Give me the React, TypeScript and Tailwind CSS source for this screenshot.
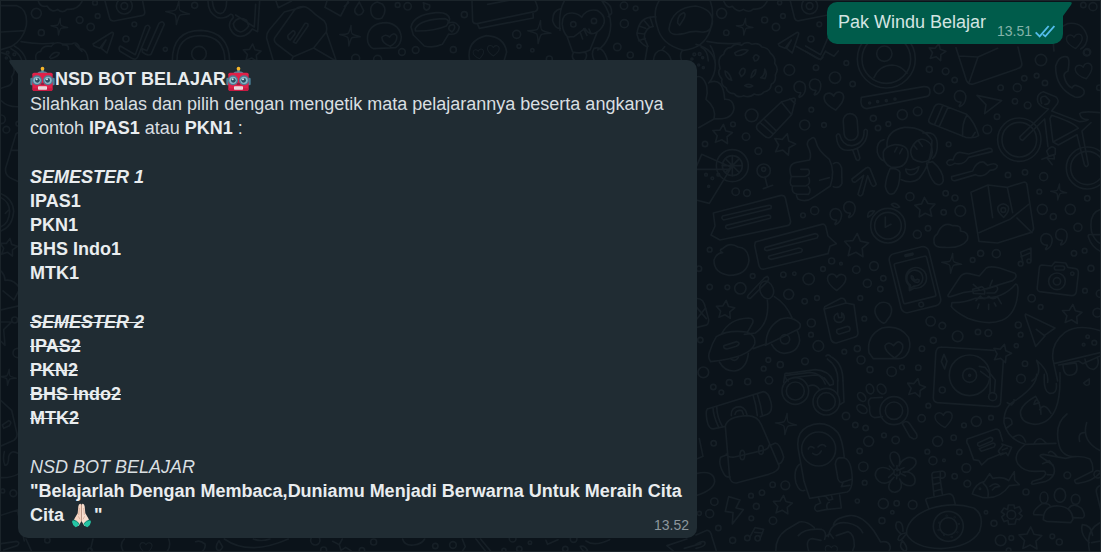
type Dot = [x: number, y: number, r: number];

function Dots({ items }: { items: Dot[] }) {
  return (
    <>
      {items.map(([x, y, r]) => (
        <circle key={`${x}-${y}`} cx={x} cy={y} r={r} />
      ))}
    </>
  );
}

function Star({ x, y, r, turn = 0 }: { x: number; y: number; r: number; turn?: number }) {
  const points = Array.from({ length: 10 }, (_, i) => {
    const angle = (Math.PI / 5) * i - Math.PI / 2 + (turn * Math.PI) / 180;
    const radius = i % 2 ? r * 0.5 : r;
    return `${(x + radius * Math.cos(angle)).toFixed(1)},${(y + radius * Math.sin(angle)).toFixed(1)}`;
  });
  return <polygon points={points.join(" ")} />;
}

function Sparkle({ x, y, r }: { x: number; y: number; r: number }) {
  return (
    <path
      transform={`translate(${x} ${y}) rotate(6) scale(${r / 10})`}
      strokeWidth={45 / r}
      d="M0-10Q1-2 2-2Q3-1 10 0Q3 1 2 2Q1 3 0 10Q-1 3-2 2Q-3 1-10 0Q-3-1-2-2Q-1-3 0-10Z"
    />
  );
}

function Heart({ x, y, s = 1, turn = 0 }: { x: number; y: number; s?: number; turn?: number }) {
  return (
    <path
      transform={`translate(${x} ${y}) rotate(${turn}) scale(${s})`}
      d="M0 27C-13 18-29 5-28-10C-27-25-7-29 0-13C8-28 28-24 28-8C28 6 12 18 0 27Z"
    />
  );
}

function Quote({ x, y }: { x: number; y: number }) {
  return <path d={`M${x + 2} ${y + 15}C${x - 24} ${y + 18} ${x - 24} ${y - 20} ${x} ${y - 19}C${x + 26} ${y - 16} ${x + 18} ${y + 24} ${x - 2} ${y + 29}C${x - 7} ${y + 27} ${x + 4} ${y + 20} ${x + 2} ${y + 15}Z`} />;
}

function Donut({ x, y }: { x: number; y: number }) {
  return (
    <g transform={`translate(${x} ${y})`}>
      <path d="M-86-16Q-91-39-73-48Q-69-68-50-69Q-38-84-20-75Q-5-89 12-78Q31-85 42-70Q61-68 67-52Q84-39 80-21Q94-4 82 14Q85 35 70 42Q68 61 48 65Q36 79 19 71Q4 84-13 76Q-31 84-41 70Q-61 70-66 52Q-82 45-78 27Q-94 8-84-5Z" />
      <path d="M-69 2Q-55 7-49 30Q-68 24-69 2ZM-26 8Q-19-12-9-3Q-7 10-20 19ZM9 22Q12 0 24-2Q23 16 9 22ZM16-38Q22-53 33-41Q31-28 20-28ZM-40-52Q-17-67 0-60Q-13-42-36-45ZM-10 46Q3 38 14 47Q2 54-10 46ZM38 22Q52 14 50-4Q59 9 51 25Z" />
    </g>
  );
}

function Wallpaper() {
  return (
    <svg
      aria-hidden="true"
      className="absolute inset-0 h-full w-full fill-none stroke-[#161f26]"
      strokeLinecap="round"
      strokeLinejoin="round"
      strokeWidth="5"
    >
      <g transform="translate(695 50) scale(.3333)">
        <Donut x={156} y={58} />
        <path d="M0-20Q55-5 58 40Q58 75 38 96M0 78Q20 70 32 105Q36 125 30 145Q62 170 54 204L8 230M40 94Q82 78 86 145Q112 143 114 172Q109 208 56 203" />
        <Dots items={[[20, 20, 3], [8, 42, 3], [22, 50, 3]]} />
        <path d="M300-14L374 26L389 0M390 2L414 16L427 0" />
        <circle cx="571" cy="24" r="87" />
        <circle cx="571" cy="24" r="73" />
        <circle cx="565" cy="8" r="23" />
        <path d="M534 80Q550 43 588 42Q615 43 633 67M780-10L812 90Q818 102 832 99L968 52Q980 48 977 34L966-12M788 15L846 18L905-8M846 18L820 93" />
        <Star x={723} y={4} r={27} turn={12} />
        <Quote x={312} y={110} />
        <Quote x={358} y={103} />
        <Quote x={793} y={138} />
        <Heart x={415} y={149} s={1.05} turn={-8} />
        <Heart x={1165} y={60} s={0.9} turn={-15} />
        <path d="M1110 17Q1088 14 1079 45Q1078 112 1137 138Q1154 142 1164 128Q1169 113 1147 106Q1135 98 1128 111Q1110 102 1105 78Q1101 67 1116 60Q1124 17 1110 17Z" />
        <path d="M496 139L683 107Q703 106 702 122Q702 135 690 137L512 173Q490 170 496 139Z" />
        <Dots items={[[521, 156, 3], [545, 152, 3], [571, 149, 3], [597, 144, 3]]} />
        <path d="M184 221L256 153L294 141Q300 143 297 151L287 191L224 258Q214 264 204 254L186 238Q178 230 184 221ZM195 217L231 249M207 207L240 239M256 153L287 191M282 143L297 158" />
        <path d="M698 207L715 168Q721 156 734 160L812 190Q838 215 848 254Q836 263 809 259L711 220Q697 216 698 207ZM716 220L741 162M730 226L756 169M813 192Q797 218 800 256M838 244L828 259" />
        <path d="M843 133L917 149L866 188L870 161Z" />
        <rect x="443" y="188" width="42" height="80" rx="21" transform="rotate(-4 464 228)" />
        <path d="M421 255C425 303 450 300 472 296C499 290 515 266 514 239Q509 230 504 240Q506 277 469 284Q440 286 431 251Q424 245 421 255ZM470 297L481 326Q489 332 492 321L484 293" />
        <Star x={79} y={251} r={31} turn={6} />
        <Star x={265} y={281} r={34} turn={15} />
        <Star x={687} y={471} r={32} turn={-3} />
        <path d="M344 264Q355 253 360 272Q365 298 400 325Q418 359 403 405L352 439Q329 456 306 444Q299 433 303 429Q286 428 289 405Q278 401 286 377Q273 339 302 334L341 327Q348 310 335 285Q331 270 344 264ZM286 377L329 376Q347 369 337 355L314 355M289 405L329 405Q347 398 338 380M303 429L337 430Q348 419 337 407M371 388L400 380M412 338Q430 327 437 351L438 397Q430 414 412 407" />
        <path d="M468 384L510 351Q518 347 522 353L541 400Q533 412 526 400L515 374L500 430Q493 440 486 430L503 373L480 392Q468 397 468 384Z" />
        <path d="M573 287Q570 238 625 229Q682 227 708 268Q707 338 669 383Q648 400 616 386M564 266Q540 271 544 304Q550 325 562 329M681 246Q721 238 724 278Q725 310 710 322M562 303Q559 338 585 348Q628 356 636 316Q640 280 596 281Q568 286 562 303ZM650 285Q637 303 652 324Q678 342 702 325Q715 306 704 279Q672 248 650 285ZM583 352Q570 378 568 407Q575 437 594 427Q612 409 612 364Q607 352 583 352ZM692 336Q697 375 717 397Q735 408 742 390Q743 360 710 332ZM629 354Q650 361 669 347Q663 374 642 371Q631 370 629 354ZM603 289L596 303M619 293L611 308M652 281L663 295M668 271L679 286" />
        <path d="M752 335Q757 323 771 327Q778 303 792 304L818 309L878 292Q891 291 888 302L818 319Q802 345 776 337Q757 350 752 335ZM767 377L830 360Q841 331 863 333L875 343Q897 333 904 344Q904 356 882 358Q862 383 839 371L778 389Q765 391 767 377Z" />
        <circle cx="970" cy="266" r="65" />
        <circle cx="970" cy="266" r="52" />
        <circle cx="1174" cy="351" r="63" />
        <circle cx="1174" cy="351" r="50" />
        <path d="M972 257L1058 174Q1035 170 1026 154Q1019 130 1042 122L1079 137Q1091 147 1084 158L1067 180L1151 212Q1168 212 1177 206Q1155 207 1151 188Q1158 179 1215 185M980 268L1046 204L1056 287M1062 203L1071 273L1147 232Q1132 214 1067 193ZM1071 273L1087 282L1143 251L1165 340Q1171 353 1177 341L1158 240L1185 215M972 257Q970 266 980 268M1037 157Q1028 134 1049 136L1061 149Q1057 162 1047 160M1052 300Q1066 280 1078 293L1078 310L1058 315ZM1038 325L1074 311L1075 324L1053 321L1069 341" />
        <circle cx="109" cy="344" r="48" />
        <circle cx="109" cy="344" r="30" />
        <path d="M109 314V374M79 344H139M88 323L130 365M130 323L88 365M0 349L17 310L106 349L40 457L0 447M0 355H98" />
        <Dots items={[[30, 371, 4], [49, 382, 4], [67, 371, 4], [38, 406, 3], [203, 355, 6], [203, 359, 20]]} />
        <path d="M207 379L214 406M202 413L230 403" />
        <path d="M825 424L876 402L934 409L985 393Q992 393 993 402L1013 532Q1013 540 1004 545L905 576L849 571ZM876 402L890 500M934 409L950 485" />
        <path d="M923 499Q900 480 907 466Q922 451 936 466Q943 480 923 499ZM849 545L942 505L998 460M963 501L1008 545" />
        <circle cx="922" cy="477" r="7" />
        <Sparkle x={1088} y={423} r={24} />
        <path d="M52 486L252 434Q264 431 268 441L284 512Q283 522 274 524L72 567L45 552L57 525ZM80 495L218 463Q228 461 225 472L83 507Q74 502 80 495ZM91 523L218 492Q226 493 223 502L96 534Q85 532 91 523Z" />
        <circle cx="576" cy="524" r="52" />
        <circle cx="576" cy="524" r="40" />
        <path d="M568 498V529L585 520M586 460Q598 451 611 468Q597 474 586 460ZM515 496Q514 477 536 480Q528 493 516 499Z" />
        <Quote x={420} y={492} />
        <Quote x={461} y={471} />
        <path d="M1215 475Q1177 484 1187 544Q1198 573 1215 578" />
        <Dots
          items={[[280, 57, 16], [360, 50, 8], [451, 36, 7], [470, 99, 8], [417, 80, 17], [248, 115, 10], [346, 176, 7], [167, 193, 19], [326, 222, 15], [384, 222, 7], [111, 220, 7], [150, 257, 11], [187, 300, 10], [27, 279, 8], [119, 422, 11], [153, 426, 10], [356, 479, 12], [321, 493, 7], [532, 202, 9], [546, 231, 8], [577, 219, 7], [619, 191, 15], [665, 181, 13], [729, 113, 15], [700, 55, 9], [749, 61, 10], [776, 87, 8], [914, 110, 8], [964, 110, 12], [985, 82, 8], [1022, 74, 7], [1035, 27, 17], [1047, 96, 8], [957, 151, 8], [995, 163, 10], [903, 197, 8], [874, 235, 13], [758, 280, 7], [642, 437, 12], [749, 427, 8], [777, 441, 9], [793, 480, 16], [743, 484, 8], [936, 372, 8], [987, 364, 8], [1043, 377, 12], [1030, 422, 7], [1039, 475, 15], [1072, 497, 9], [1123, 475, 15], [1174, 442, 8], [1174, 3, 10], [1210, 110, 8]]}
        />
      </g>

      <g transform="translate(695 210) scale(.3333)">
        <path d="M178 93L377 40Q389 37 391 54L396 75L421 98L402 106L396 128L205 174Q191 177 188 160L176 103ZM208 109L358 68Q371 71 363 81L213 119Q202 118 208 109ZM219 135L309 111Q324 113 316 123L225 145Q214 142 219 135Z" />
        <path d="M80 113Q101 91 126 108Q157 110 159 149Q153 193 99 193Q53 186 54 147Q61 126 80 125Q66 117 80 113Z" />
        <Star x={481} y={105} r={38} turn={4} />
        <Star x={88} y={297} r={29} turn={5} />
        <Star x={1128} y={311} r={31} turn={5} />
        <Star x={918} y={428} r={29} turn={15} />
        <path d="M724 69Q739 30 770 44Q798 42 793 60Q821 63 814 87Q796 113 746 109Q713 111 714 91Q712 76 724 69Z" />
        <g transform="translate(657 206) rotate(-14)">
          <rect x="-61" y="-91" width="122" height="182" rx="18" />
          <rect x="-50" y="-61" width="100" height="124" rx="5" />
          <rect x="-12" y="-79" width="25" height="5" rx="2" />
          <circle cx="0" cy="77" r="7" />
          <path d="M-24 28L-21 13A31 31 0 1 1-8 24ZM-20 22L-17 12A24 24 0 1 1-8 18Z" />
          <path d="M-8-14Q-13-4-1 7Q10 14 12 4Q7-1 2 2Q-7-5-3-9Q-4-14-8-14Z" />
        </g>
        <Sparkle x={767} y={157} r={30} />
        <path d="M757 251L790 201Q801 184 820 188L850 195L871 171Q882 164 911 171L957 187Q966 198 950 209L857 237L805 244L764 257Q753 258 757 251ZM768 275Q806 276 838 262Q894 262 915 252Q942 240 959 219Q969 220 965 252Q958 311 918 328Q876 344 815 322Q773 299 766 286ZM830 235L858 227Q868 233 866 249L832 247ZM872 234L901 225Q911 235 896 246H873M840 269L853 255Q864 270 878 256Q891 270 904 257L916 278M845 292L849 279M878 295V280M900 285L895 276M832 220L850 236M889 208L882 225" />
        <path d="M981 156L974 124L1005 111V149M975 137L1004 125" />
        <circle cx="974" cy="158" r="7" />
        <circle cx="999" cy="150" r="6" />
        <Quote x={1052} y={87} />
        <Quote x={1097} y={73} />
        <path d="M1038 162L1067 165L1077 153L1109 156L1116 169L1139 173Q1149 176 1147 189L1141 242Q1139 254 1127 254L1031 242Q1022 239 1024 228L1030 171Q1031 162 1038 162Z" />
        <circle cx="1083" cy="211" r="25" />
        <circle cx="1083" cy="211" r="11" />
        <circle cx="1129" cy="188" r="5" />
        <rect x="1075" y="165" width="31" height="12" rx="6" />
        <path d="M989 309L1077 351L1045 374L1021 355L1047 375L1019 406L990 321Q986 311 989 309ZM1215 71H1188Q1173 68 1178 80Q1187 108 1215 122" />
        <path d="M386 287L435 262Q447 260 450 276L474 281L486 366Q486 376 475 379L421 396Q410 397 405 386L384 294ZM386 294L450 276M423 356L455 346Q466 349 460 360L429 370Q419 366 423 356Z" />
        <path d="M425 307Q408 315 418 330Q431 340 443 327Q448 312 437 306L438 319L428 320Z" />
        <Heart x={422} y={212} s={0.98} />
        <path d="M550 277Q564 270 578 278Q593 293 583 314L569 334Q563 341 549 327Q524 295 550 277ZM532 443L519 425Q511 374 558 351Q611 339 638 380Q648 411 631 432Q622 444 604 443ZM596 441Q565 420 567 404Q577 389 593 404Q608 382 620 402Q625 421 596 441Z" />
        <path d="M157 252L206 200L214 196Q222 203 213 213L163 262Q150 263 157 252ZM214 267Q222 336 178 366L145 370M235 257Q270 278 288 320M172 413L210 399Q210 350 253 325Q287 312 312 338Q316 352 302 357L208 403M76 370Q100 323 157 321Q175 321 170 336L154 364M61 377Q95 356 151 363Q181 372 176 399Q161 440 44 452Q34 440 41 422Q49 396 61 377ZM84 404L122 392Q137 397 121 406L93 414Q80 412 84 404Z" />
        <ellipse cx="212" cy="237" rx="20" ry="27" transform="rotate(-20 212 237)" />
        <path d="M227 400Q239 424 264 427Q306 425 311 389Q309 369 303 359M70 453Q87 482 116 480Q152 474 157 427M104 443Q118 455 127 439" />
        <circle cx="267" cy="385" r="14" />
        <path d="M0 263Q22 259 29 292L38 326Q38 342 27 343L0 350M0 287L31 323M0 327L28 292" />
        <path d="M738 408L894 418M727 410Q719 416 719 434L712 560Q712 572 724 575L898 587Q912 587 914 575L922 451M727 410L738 408" />
        <circle cx="821" cy="493" r="61" />
        <circle cx="821" cy="493" r="21" />
        <circle cx="821" cy="493" r="3" />
        <path d="M744 430L753 451L746 474L736 452ZM850 466L867 469L898 507L895 547M854 481L883 503L882 548" />
        <circle cx="890" cy="557" r="12" />
        <path d="M1085 510L1071 446Q1064 398 1107 364Q1147 337 1215 360M1074 458L1215 424M1088 462L1148 450L1160 458L1215 434M1101 461Q1103 504 1135 489Q1148 480 1140 456ZM1167 444Q1171 477 1194 475Q1213 464 1204 438M1022 448Q1060 478 1055 514M1022 448Q1040 489 1008 510" />
        <path d="M390 435Q395 427 405 437Q441 456 441 510M394 444Q426 465 426 510M266 490Q267 485 277 487L358 476Q398 478 412 510M266 494Q270 506 277 510M290 500L356 492Q380 493 392 510" />
        <Dots
          items={[[41, 116, 7], [9, 173, 8], [41, 228, 8], [94, 229, 7], [133, 232, 17], [170, 195, 7], [262, 191, 8], [295, 188, 5], [338, 204, 17], [278, 250, 15], [326, 271, 8], [363, 261, 7], [381, 174, 7], [407, 150, 9], [435, 158, 4], [481, 176, 11], [534, 165, 13], [514, 217, 12], [562, 202, 8], [553, 234, 8], [493, 261, 7], [505, 323, 7], [346, 336, 12], [345, 371, 7], [367, 405, 16], [327, 451, 10], [217, 447, 7], [253, 461, 9], [203, 473, 7], [22, 484, 16], [13, 387, 8], [445, 422, 7], [484, 413, 9], [495, 447, 12], [522, 476, 9], [587, 482, 14], [618, 469, 7], [667, 470, 8], [678, 413, 8], [704, 331, 14], [739, 344, 10], [712, 388, 9], [785, 376, 16], [846, 363, 8], [877, 366, 10], [967, 342, 9], [974, 371, 7], [961, 404, 6], [1007, 262, 11], [1034, 288, 7], [1204, 305, 13], [1167, 239, 7], [1212, 248, 11], [1185, 172, 9], [1134, 127, 8], [1166, 119, 7], [1146, 49, 12], [901, 128, 12], [854, 127, 9], [830, 147, 7], [664, 70, 12], [696, 52, 8], [987, 458, 8], [1175, 377, 5], [1195, 395, 7], [1163, 401, 4]]}
        />
      </g>

      <g transform="translate(695 370) scale(.3333)">
        <path d="M34 114L202 62Q217 62 225 94Q231 122 214 130L193 137M34 114Q28 121 33 148Q38 177 55 173L88 166M51 109Q51 133 68 169M62 106Q63 140 79 166M171 72Q181 102 184 134M184 69Q195 104 199 132M106 134Q104 107 133 107Q150 112 153 132M117 130Q120 115 138 119L142 130M88 166Q93 137 154 134Q186 135 196 161L249 284Q251 300 218 310L121 336Q105 337 101 320ZM91 249Q96 261 116 258L201 238Q220 233 219 222M91 252L74 259Q66 278 83 307Q89 320 103 318M224 223L238 216Q252 217 263 258Q260 274 249 279" />
        <ellipse cx="139" cy="252" rx="7" ry="14" />
        <ellipse cx="195" cy="237" rx="7" ry="13" />
        <Sparkle x={270} y={159} r={32} />
        <circle cx="298" cy="60" r="40" />
        <circle cx="298" cy="60" r="27" />
        <circle cx="391" cy="92" r="40" />
        <circle cx="391" cy="92" r="27" />
        <path d="M263 35L266 14L342 4Q375 5 388 39M338 45Q357 36 371 56M425 28V70M441 28L444 93L430 102M412 30V40L401 43L384 20" />
        <ellipse cx="522" cy="54" rx="11" ry="15" transform="rotate(-18 522 54)" />
        <ellipse cx="557" cy="54" rx="12" ry="16" transform="rotate(-35 557 54)" />
        <ellipse cx="497" cy="78" rx="10" ry="15" transform="rotate(-40 497 78)" />
        <ellipse cx="498" cy="114" rx="11" ry="17" transform="rotate(-55 498 114)" />
        <path d="M559 79L525 81Q512 88 521 107Q518 137 536 140L559 137M619 158Q630 145 641 158L662 189Q667 203 653 204L641 197Z" />
        <circle cx="594" cy="119" r="42" />
        <circle cx="594" cy="119" r="26" />
        <Star x={660} y={51} r={29} turn={12} />
        <Heart x={744} y={145} s={0.92} turn={-8} />
        <path d="M341 382L324 331L309 247Q295 187 334 167Q386 143 425 184Q440 205 445 261Q467 267 469 326Q468 355 454 363ZM310 280Q291 297 300 336Q311 365 326 358M418 279Q420 263 431 260L446 261M418 279L426 324Q431 338 442 333L467 325M442 333L436 347L461 343M368 382L374 396L360 402Q351 414 363 421L389 416L436 411L431 372M391 378L399 388L410 385L407 376M400 394Q389 397 394 414" />
        <circle cx="368" cy="234" r="51" />
        <path d="M337 234Q340 222 354 231M366 228Q379 215 389 226M350 247Q365 259 376 240" />
        <path d="M594 285C555 232 625 226 609 285C626 240 688 262 646 294Q631 307 621 303C668 294 671 365 622 338Q613 331 611 324C636 374 562 376 582 334Q586 325 594 319C565 360 519 319 546 294Q562 284 581 296M578 319L594 304M580 285L595 300M603 284V299L624 290M603 309L602 323M611 306L629 315" />
        <circle cx="603" cy="304" r="10" />
        <path d="M814 204L900 174Q910 174 912 184L920 210M814 204Q809 213 817 222L833 266L849 269L857 282L875 265L921 246M846 216L884 199Q895 202 887 211L851 226Q842 224 846 216ZM850 233L892 216Q902 218 894 228L856 241ZM907 240L921 223L918 219L947 229L936 254L930 245L914 252ZM919 237L934 231" />
        <path d="M1022 10Q1024 43 962 86Q923 104 924 155Q934 204 988 220L1080 217M1045 10Q1042 61 1060 67Q1085 70 1081 38M1092 5Q1094 76 1080 111Q1062 158 1017 160Q969 155 974 119Q981 98 1019 76M1019 76Q1035 101 1035 130M1014 100Q1019 77 1030 95L1014 100M1031 116Q1045 92 1065 127M926 142Q950 137 948 159L932 171M953 198Q978 181 989 213M1013 220Q1029 187 1052 219M934 95L947 102Q958 91 954 86M988 220Q948 251 966 279Q985 304 1023 301L1044 300Q1057 308 1036 323L1010 331Q1001 341 1014 339L1050 331Q1086 314 1071 282L1036 258Q1027 252 1042 250L1109 262Q1152 250 1182 264Q1193 280 1190 301L1136 328Q1136 341 1152 336Q1191 331 1215 303M1113 129Q1074 159 1089 221Q1097 258 1140 257M1172 155Q1155 211 1215 240M1058 245Q1065 233 1085 258M1040 278L1060 269L1071 284M1054 311L1072 312M1151 211Q1145 185 1164 185" />
        <path d="M829 369Q838 337 865 332L881 308L890 322Q922 315 938 329L955 302L956 327L970 341L940 344Q911 387 858 379ZM862 337Q880 351 876 376M882 346Q900 331 911 346L897 349L889 357" />
        <circle cx="852" cy="353" r="2" />
        <path d="M699 415L690 389Q687 382 700 381L756 369Q768 367 773 380L778 401M714 374L708 315Q706 302 719 303L739 300Q750 302 747 316Q742 324 732 320L739 369M712 321L732 318M711 341L734 335M714 361L738 354M733 303V320M632 478Q641 437 700 414Q771 391 833 411Q867 431 851 481Q823 528 735 533Q656 531 632 490ZM629 486Q608 488 606 505Q612 516 628 492M616 489Q593 472 602 454Q621 447 621 481M619 509Q605 531 629 542Q638 530 619 509" />
        <circle cx="757" cy="466" r="45" />
        <circle cx="757" cy="466" r="26" />
        <Dots items={[[752, 434, 1], [776, 439, 1], [789, 459, 1], [784, 484, 1], [767, 498, 1], [744, 492, 1], [728, 477, 1], [730, 455, 1]]} />
        <path d="M937 402L954 402L956 412L970 407L977 420L969 427L979 435L970 446L961 444L957 459L938 460L936 448L924 452L917 438L926 430L916 423L924 411L935 416Z" />
        <circle cx="946" cy="431" r="13" />
        <path d="M1042 446Q1043 402 1088 405Q1128 407 1131 445L1124 455L1051 451ZM1039 432L1014 431Q1007 421 1038 398Q1059 396 1063 406M1133 440L1160 441Q1172 436 1157 412Q1132 393 1119 411" />
        <ellipse cx="1092" cy="373" rx="17" ry="21" />
        <ellipse cx="1044" cy="380" rx="12" ry="17" />
        <ellipse cx="1139" cy="385" rx="13" ry="15" />
        <Star x={1003} y={504} r={36} turn={2} />
        <path d="M1180 515Q1151 489 1159 461Q1186 462 1190 493M1182 546Q1165 477 1215 454M1187 515L1215 510M1215 343Q1197 349 1202 367L1215 419" />
        <path d="M98 377L132 387L120 411L142 416L109 459L111 425L88 421ZM0 308Q55 295 56 332Q52 358 0 374M0 492L33 478Q44 477 48 498L63 546M0 520Q26 506 27 516Q29 526 0 532" />
        <path d="M161 499L177 470L203 475L193 501M176 484L200 486" />
        <circle cx="154" cy="501" r="8" />
        <circle cx="185" cy="502" r="8" />
        <path d="M240 546Q236 501 270 477L310 453Q333 449 355 470M307 494Q326 471 376 475Q394 480 386 505M397 497Q406 448 456 456Q489 462 500 485M412 466Q413 441 460 434Q496 429 534 480L554 513Q583 508 583 532L577 546M340 546Q325 506 349 503L375 508M390 496L402 488L412 502M421 494L456 482Q475 488 475 525L468 546" />
        <Heart x={406} y={539} s={0.65} />
        <Star x={260} y={403} r={30} turn={5} />
        <path d="M10 203L21 256L0 265M1163 36L1180 24V39Q1171 48 1163 36Z" />
        <Dots
          items={[[52, 48, 8], [76, 64, 7], [100, 35, 9], [155, 32, 9], [219, 28, 11], [53, 217, 8], [230, 341, 8], [268, 343, 13], [198, 365, 8], [165, 374, 7], [181, 406, 9], [166, 442, 7], [231, 449, 11], [55, 392, 11], [41, 428, 12], [67, 471, 8], [110, 508, 9], [10, 427, 6], [450, 135, 11], [478, 162, 8], [509, 171, 8], [518, 211, 15], [564, 193, 7], [599, 207, 11], [491, 240, 8], [502, 287, 14], [506, 335, 7], [484, 390, 6], [562, 398, 15], [602, 397, 8], [650, 401, 13], [589, 424, 5], [558, 449, 9], [677, 142, 11], [697, 104, 7], [725, 211, 15], [773, 200, 8], [694, 242, 7], [711, 269, 12], [744, 268, 4], [790, 243, 8], [811, 291, 13], [776, 316, 8], [814, 338, 10], [841, 151, 15], [804, 163, 7], [885, 140, 7], [739, 57, 9], [975, 23, 13], [990, 363, 9], [1114, 313, 10], [1205, 310, 11], [870, 424, 5], [894, 457, 9], [914, 508, 16], [946, 501, 7], [938, 538, 7], [1069, 496, 7], [1090, 513, 9]]}
        />
      </g>

      <g transform="scale(.3333)">
        <path d="M0 14H48Q81 25 76 73Q67 117 30 137L0 146M0 93L72 89M60 122Q115 132 158 126M40 135Q69 151 76 180M30 143Q57 157 63 180M112 0Q117 20 138 15Q153 38 170 25Q184 39 198 25Q229 28 243 2M106 180Q99 154 119 151Q124 132 151 136Q163 119 185 129L212 129Q231 119 236 142Q260 145 262 180M146 169Q158 149 175 156Q172 167 149 173M185 132Q205 130 202 145M223 131L243 151" />
        <path d="M312 0L326 52Q329 61 339 60L422 44Q433 42 431 31L425 0" />
        <circle cx="370" cy="15" r="24" />
        <circle cx="370" cy="15" r="10" />
        <Sparkle x={175} y={77} r={25} />
        <Sparkle x={530} y={35} r={36} />
        <Sparkle x={1047} y={104} r={31} />
        <path d="M276 129L333 94Q338 93 337 100L318 156L301 142L315 117L296 142L279 135ZM358 135L403 161L433 77Q442 67 447 80L410 168Q405 179 391 171L357 151Q351 140 358 135ZM424 143L438 149L474 67Q486 57 490 70L451 158Q444 168 424 153Z" />
        <path d="M514 180Q514 88 600 88Q684 92 686 180M528 180Q527 103 600 104Q671 106 672 180" />
        <circle cx="594" cy="158" r="22" />
        <path d="M621 0Q621 36 650 50Q673 54 688 40Q696 38 697 50Q680 66 688 84Q703 113 730 104Q745 98 754 84L770 92L776 0M634 0Q638 38 659 38Q677 34 677 0M697 68Q710 43 737 58L743 75Q731 92 718 93Q699 88 697 68ZM704 42L760 78L764 10M825 0L832 20L872 0" />
        <Star x={753} y={157} r={28} turn={4} />
        <path d="M817 180L797 112Q796 97 804 88L850 33L909 17Q919 17 943 40L970 60Q980 73 976 93L938 141L877 167L827 129Q817 121 821 111L880 28Q890 16 909 17M861 103L876 89Q885 92 881 100L868 117Q859 114 861 103ZM877 123L912 67Q923 65 921 75L885 127ZM938 141L1005 180M976 93L1006 180M877 167L870 180M978 0L972 19L1019 45L1042 0M1030 16L1043 5M1075 3L1088 29Q1083 43 1071 42Q1057 34 1063 22ZM1129 3Q1102 11 1112 41Q1123 60 1143 51Q1160 27 1145 10ZM1118 143Q1094 133 1101 99Q1112 65 1156 65Q1197 70 1201 109Q1200 131 1184 140ZM1168 136Q1142 126 1143 109Q1153 97 1166 108Q1177 92 1187 104Q1191 122 1168 136Z" />
        <Dots
          items={[[106, 37, 15], [236, 57, 10], [269, 78, 11], [290, 45, 7], [121, 95, 9], [375, 114, 9], [400, 70, 7], [581, 13, 9], [493, 145, 6], [282, 5, 7], [1190, 12, 7], [1203, 153, 10], [1064, 172, 12], [1130, 175, 12], [20, 155, 4], [40, 160, 4], [16, 171, 3]]}
        />
      </g>

      <g transform="translate(400) scale(.3333)">
        <path d="M30 78Q38 41 105 35Q142 32 146 54L143 66Q163 58 175 78Q171 104 143 99L124 130Q99 142 70 135L37 102ZM43 82Q61 54 132 53Q149 57 136 75Q99 91 43 90ZM144 86Q141 72 157 70Q167 79 153 93ZM213 0L215 61Q218 71 232 67L403 31Q412 28 409 16L403 0M229 68L235 82L397 51L396 33M260 10L360-9M67 5L86 12Q88 24 77 28Q66 24 69 12Z" />
        <path d="M206 180Q194 119 256 104Q309 106 317 153L309 180" />
        <Heart x={233} y={158} s={0.57} turn={-10} />
        <Heart x={277} y={148} s={0.63} />
        <Sparkle x={415} y={93} r={35} />
        <path d="M490 0Q472 30 477 88M603 0Q641 51 624 104Q612 135 590 147M480 23Q454 28 455 60Q464 85 478 82M608 1Q633 10 632 37L622 47M484 71Q482 35 514 36Q533 38 542 49Q557 22 588 28Q617 45 608 70Q598 90 584 95Q565 105 552 82Q537 93 519 107L500 108Q486 94 484 71ZM499 109L515 153Q544 160 567 147L588 95M538 95L545 114M548 83L558 103M564 84L570 98M517 156Q509 170 522 180M553 154Q562 164 550 180M579 142Q608 134 620 180M580 180Q569 158 579 142" />
        <circle cx="517" cy="70" r="8" />
        <circle cx="579" cy="60" r="8" />
        <path d="M774 0Q754 33 769 77Q781 132 848 148Q909 142 928 87Q942 38 928 0M804 84Q812 20 884 15Q939 25 934 68Q929 96 901 93Q877 88 848 98Q807 107 804 84ZM830 66Q829 41 849 35Q856 40 848 54L836 73ZM765 48Q713 44 708 100Q713 126 739 138L732 180M757 76Q731 80 730 110L741 136M713 75L734 82M707 96L729 99M713 119L733 112M728 57L744 76M747 49L755 72M757 180Q760 149 783 147L791 137M783 147Q807 157 811 180M843 150Q835 161 842 180M901 139Q920 148 922 180M928 134Q940 150 942 180M918 121Q969 132 1018 126" />
        <Dots items={[[880, 160, 4], [896, 159, 4], [873, 174, 3], [20, 16, 11], [190, 41, 9], [347, 100, 12], [44, 147, 10], [157, 146, 9], [354, 136, 6], [394, 148, 5], [445, 174, 9], [670, 68, 12], [669, 14, 11], [704, 22, 7], [649, 138, 11], [688, 162, 9], [962, 37, 15], [1091, 57, 9], [1125, 78, 11], [1146, 45, 7], [976, 95, 8], [1230, 114, 9], [1255, 70, 7], [1136, 5, 6]]} />
        <path d="M968 0Q978 25 994 16Q1010 37 1027 25Q1045 37 1057 24Q1085 27 1098 2M1168 0L1181 52Q1184 61 1195 59L1281 42M1214 135L1259 161L1281 110M1213 151L1247 171Q1261 179 1266 168" />
        <circle cx="1226" cy="15" r="24" />
        <circle cx="1226" cy="15" r="10" />
        <Sparkle x={1031} y={77} r={25} />
        <path d="M1132 129L1189 94Q1194 93 1193 100L1174 156L1157 142L1171 117L1152 142L1135 135Z" />
      </g>

      <g transform="translate(1063) scale(.3333)">
        <Dots items={[[58, 12, 8], [87, 17, 12], [68, 155, 10]]} />
        <path d="M-30 150Q-40 90 10 68Q57 60 70 108Q69 134 50 144" />
        <Heart x={32} y={120} s={0.85} turn={-8} />
      </g>

      <g transform="translate(0 60) scale(.3333)">
        <path d="M0-25Q35-17 29 6Q49 26 32 47Q40 70 18 76L0 82M0 119Q20 140 56 137M56 212L45 218L14 321Q11 340 27 350L56 364M34 268H56M0 398Q36 413 38 451Q35 497 0 510M0 410Q24 421 26 451Q24 488 0 497M13 457L22 448M0 630Q12 642 12 658Q38 653 57 682L39 717L6 690M0 747L56 734M0 783H32L8 806L12 853L0 841M0 1019L32 1048L48 1118Q49 1131 39 1138L0 1155M4 1092L23 1079Q35 1083 25 1094L8 1102ZM10 1172Q4 1197 12 1213Q23 1213 23 1187Q30 1164 53 1178M0 1250Q32 1251 54 1238M0 1363L49 1347L70 1440" />
        <Star x={22} y={560} r={28} turn={10} />
        <Sparkle x={22} y={949} r={24} />
        <Dots items={[[16, 206, 10], [52, 188, 7], [41, 777, 9], [50, 876, 14], [37, 1297, 10], [5, 1290, 6], [0, 175, 13]]} />
      </g>

      <g transform="translate(0 532) scale(.3333)">
        <path d="M0 32L47 25Q59 28 49 38L8 51M75 18L94 60M276 18L269 47L280 60M370 60Q352 35 370 18M503 18Q512 40 495 60M584 26Q597 20 612 33Q616 50 596 60M654 23L665 42Q658 57 648 50Q642 38 654 23ZM670 18Q744 70 862 18M757 18Q780 27 807 18M995 25L1015 35L1024 18M1015 35L1020 52L1034 43L1050 53M1205 18Q1210 39 1238 36Q1262 34 1271 18M1384 18L1393 41L1381 60M1425 18L1458 60M1439 18L1474 60M1635 22L1640 34L1671 20M1755 24Q1780 42 1826 20M1738 40Q1751 36 1760 52Q1747 63 1738 40ZM2058 18L1998 38L2024 60M2050 46L2100 32" />
        <Heart x={435} y={44} s={0.65} />
        <Dots items={[[139, 22, 8], [267, 51, 6], [943, 22, 14], [968, 51, 9], [1118, 27, 9], [1303, 39, 8], [1356, 36, 10], [1555, 48, 8], [1587, 29, 5], [1693, 48, 8], [1509, 52, 6], [1083, 52, 8], [1718, 18, 10], [1535, 17, 10]]} />
      </g>
    </svg>
  );
}

function RobotEmoji() {
  return (
    <svg role="img" aria-label="robot" viewBox="0 0 75 78" className="h-[26px] w-[25px] shrink-0">
      <rect x="1" y="35" width="10" height="23" rx="4" fill="#4a8198" />
      <rect x="64" y="35" width="10" height="23" rx="4" fill="#4a8198" />
      <rect x="34" y="10" width="7" height="13" fill="#5d91a3" />
      <circle cx="37.500" cy="8" r="5.500" fill="#f5b52a" />
      <path d="M22 22Q24 16 37 16T53 22Z" fill="#528da3" />
      <rect x="7" y="20" width="61" height="55" rx="5" fill="#df2149" />
      <path d="M8 67H67L65 75H10Z" fill="#c71b43" />
      <path d="M34 50L41 50L43 57H32Z" fill="#8f2443" />
      <circle cx="21" cy="43" r="15" fill="#4d7c93" />
      <circle cx="54" cy="43" r="15" fill="#4d7c93" />
      <circle cx="21" cy="43" r="11" fill="#8ab6c7" />
      <circle cx="54" cy="43" r="11" fill="#8ab6c7" />
      <circle cx="22" cy="43" r="7" fill="#2b4f60" />
      <circle cx="53" cy="43" r="7" fill="#2b4f60" />
      <circle cx="20" cy="40" r="3" fill="#d3e9ef" />
      <circle cx="51" cy="40" r="3" fill="#d3e9ef" />
      <rect x="24" y="61" width="27" height="10" rx="2" fill="#efdfe2" />
      <path d="M30 62V70M36 62V70M42 62V70M47 62V70" stroke="#d3aeb9" strokeWidth="1" />
    </svg>
  );
}

function PrayEmoji() {
  return (
    <svg role="img" aria-label="folded hands" viewBox="0 0 75 75" className="inline-block h-[25px] w-[25px] align-top">
      <path d="M35 2Q29 1 28 10L26 31L17 46L13 57L29 69L37 55V7Z" fill="#f4d5c3" />
      <path d="M40 2Q46 1 47 10L49 31L58 46L62 57L46 69L38 55V7Z" fill="#f8dfd0" />
      <path d="M37.500 4V55M31 15L29 36M44 15L46 36M28 40L33 49M47 40L42 49" fill="none" stroke="#cf9e89" strokeWidth="2" />
      <path d="M12 51Q24 53 31 63Q29 71 20 73Q10 66 9 56Z" fill="#25c5a4" />
      <path d="M63 51Q51 53 44 63Q46 71 55 73Q65 66 66 56Z" fill="#25c5a4" />
      <path d="M12 51Q24 53 31 63M63 51Q51 53 44 63" fill="none" stroke="#087e6e" strokeWidth="3" />
    </svg>
  );
}

function ReadTicks() {
  return (
    <svg role="img" aria-label="Read" viewBox="0 0 60 39" className="ml-[3px] h-[13px] w-5 fill-none stroke-[#53bdeb]" strokeWidth="5.500">
      <path d="M2 22L14 34L41 3M24 28L31 34L58 3" />
    </svg>
  );
}

const semesters = [
  { title: "SEMESTER 1", subjects: ["IPAS1", "PKN1", "BHS Indo1", "MTK1"], closed: false },
  { title: "SEMESTER 2", subjects: ["IPAS2", "PKN2", "BHS Indo2", "MTK2"], closed: true },
];

export default function App() {
  return (
    <main className="relative min-h-screen overflow-hidden border border-[#1b242a] bg-[#0b131a] font-['Liberation_Sans',Arial,sans-serif] text-lg/6 text-[#d9dfe1]">
      <Wallpaper />
      <div className="relative flex flex-col gap-4 pt-px pr-[37px] pb-3 pl-[17px]">
        <article className="relative flex h-[42px] items-start self-end rounded-[10px] rounded-tr-none bg-[#005c4b] pt-2 pr-2 pl-[11px] text-[#d3e4e1]">
          <p>Pak Windu Belajar</p>
          <div className="ml-[11px] flex items-center self-end pb-[5px]">
            <time className="text-sm/4 text-[#85b3a9]">13.51</time>
            <ReadTicks />
          </div>
          <svg aria-hidden="true" viewBox="0 0 10 16" className="absolute top-0 -right-[9px] h-4 w-2.5 fill-[#005c4b]">
            <path d="M0 0H8Q11 0 9 3L1 14V16H0Z" />
          </svg>
        </article>

        <article className="relative w-full max-w-[679px] rounded-[10px] rounded-tl-none bg-[#202c33] pt-1.5 pr-2 pb-[5px] pl-3">
          <svg aria-hidden="true" viewBox="0 0 10 16" className="absolute top-0 -left-[9px] h-4 w-2.5 fill-[#202c33]">
            <path d="M10 0H2Q-1 0 1 3L9 14V16H10Z" />
          </svg>
          <div className="flex flex-col gap-[25px]">
            <div>
              <h1 className="flex h-[26px] items-center font-bold text-[#e9edef]">
                <RobotEmoji />
                NSD BOT BELAJAR
                <RobotEmoji />
              </h1>
              <p>
                Silahkan balas dan pilih dengan mengetik mata pelajarannya beserta angkanya
                <br />
                contoh <strong className="text-[#e9edef]">IPAS1</strong> atau <strong className="text-[#e9edef]">PKN1</strong> :
              </p>
            </div>
            {semesters.map(({ title, subjects, closed }) => (
              <section key={title} className={closed ? "font-bold text-[#e9edef] line-through" : "font-bold text-[#e9edef]"}>
                <h2 className="italic">{title}</h2>
                <ul>
                  {subjects.map((subject) => (
                    <li key={subject}>{subject}</li>
                  ))}
                </ul>
              </section>
            ))}
            <div>
              <p className="italic">NSD BOT BELAJAR</p>
              <p className="font-bold text-[#e9edef]">
                "Belajarlah Dengan Membaca,Duniamu Menjadi Berwarna Untuk Meraih Cita
                <br />
                Cita <PrayEmoji />"
              </p>
            </div>
          </div>
          <time className="-mt-[11px] block text-right text-sm/4 text-[#8d979d]">13.52</time>
        </article>
      </div>
    </main>
  );
}
